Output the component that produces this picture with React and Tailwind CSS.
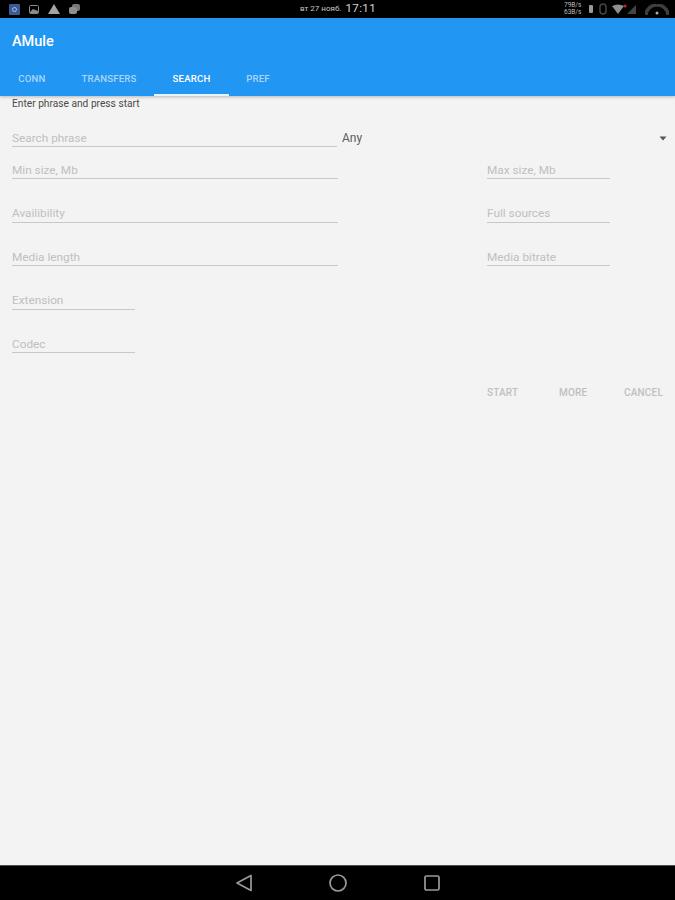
const font = { fontFamily: '"Roboto", "Liberation Sans", sans-serif' };

function Field({ label, className = "" }) {
  return (
    <div className={`h-[23px] border-b border-[#c8c8c8] flex items-center text-[11.8px] leading-none text-[#c0c0c0] pt-[7px] ${className}`}>
      {label}
    </div>
  );
}

function Row({ left, right }) {
  return (
    <div className="flex justify-between pr-[65px] h-[43.6px] items-end">
      <Field label={left} className="w-[326px]" />
      {right && <Field label={right} className="w-[123px]" />}
    </div>
  );
}

function StatusBar() {
  return (
    <div className="h-[18px] bg-black flex items-center justify-between pl-[9px] pr-[6px] relative">
      <div className="flex items-center gap-[9px]">
        <div className="w-[11px] h-[11px] bg-[#3c5b94] rounded-[1px] flex items-center justify-center">
          <div className="w-[5px] h-[5px] border border-[#a9bedf] rounded-full" />
        </div>
        <svg width="10" height="9" viewBox="0 0 10 9"><rect x="0.5" y="0.5" width="9" height="8" rx="1" fill="none" stroke="#8a8a8a" /><path d="M1 7 L4 4 L9 6 V8 H1Z" fill="#8a8a8a" /></svg>
        <svg width="12" height="10" viewBox="0 0 12 10"><path d="M6 0 L12 10 H0Z" fill="#a3a3a3" /></svg>
        <svg width="11" height="10" viewBox="0 0 11 10"><rect x="3" y="0" width="8" height="7" rx="2" fill="#777" /><rect x="0" y="3" width="8" height="7" rx="2" fill="#8f8f8f" /></svg>
      </div>
      <div className="absolute left-[300px] top-0 h-[18px] flex items-center gap-[4px] text-[#c8c8c8]">
        <span className="text-[8px]">вт 27 нояб.</span>
        <span className="text-[11.5px] tracking-[0.4px] text-[#d4d4d4]">17:11</span>
      </div>
      <div className="flex items-center gap-[5px]">
        <div className="flex flex-col text-[6.5px] leading-[7px] text-[#bdbdbd] w-[24px]">
          <span>79B/s</span>
          <span>63B/s</span>
        </div>
        <svg width="6" height="10" viewBox="0 0 6 10" className="-ml-[5px]"><rect x="1" y="1" width="4" height="8" rx="1" fill="#999" /></svg>
        <svg width="8" height="12" viewBox="0 0 8 12"><rect x="1" y="1" width="6" height="10" rx="3" fill="none" stroke="#444" strokeWidth="1.5" /></svg>
        <svg width="28" height="11" viewBox="0 0 28 11"><path d="M0 2 Q6 -1 12 2 L6 10Z" fill="#8f8f8f" /><circle cx="13" cy="2" r="1.5" fill="#c62828" /><path d="M24 1 V10 H15Z" fill="#444" /></svg>
        <svg width="24" height="11" viewBox="0 0 24 11"><path d="M1 11 A11 10 0 0 1 23 11" fill="none" stroke="#3d3d3d" strokeWidth="3.5" /><circle cx="12" cy="9" r="1.5" fill="#aaa" /></svg>
      </div>
    </div>
  );
}

function Tab({ label, active, className }) {
  return (
    <div className={`h-[36px] pt-[5px] flex items-center justify-center text-[9.6px] font-medium tracking-[0.2px] border-b-2 ${active ? "text-white font-bold border-[#e8f2fb]" : "text-[#a9d5fb] border-transparent"} ${className}`}>
      {label}
    </div>
  );
}

export default function App() {
  return (
    <div style={font} className="w-[675px] h-[900px] bg-[#f3f3f3] flex flex-col overflow-hidden">
      <StatusBar />
      <header className="h-[78px] bg-[#2196f3] flex flex-col justify-between shadow-[0_1px_3px_rgba(0,0,0,0.25)]">
        <div className="pl-[12px] pt-[16px] text-[14.5px] leading-[16px] font-medium text-white">AMule</div>
        <div className="flex">
          <Tab label="CONN" className="w-[64px]" />
          <Tab label="TRANSFERS" className="w-[90px]" />
          <Tab label="SEARCH" active className="w-[75px]" />
          <Tab label="PREF" className="w-[58px]" />
        </div>
      </header>
      <main className="flex-1 pl-[12px]">
        <div className="text-[10.2px] leading-[14px] text-[#4a4a4a] pt-[1px]">Enter phrase and press start</div>
        <div className="flex h-[28px] mt-[8px] items-end">
          <Field label="Search phrase" className="w-[325px]" />
          <div className="ml-[5px] flex-1 flex items-center justify-between pr-[8px] h-[18px] text-[12px] text-[#5c5c5c]">
            <span>Any</span>
            <svg width="8" height="5" viewBox="0 0 8 5" aria-hidden="true"><path d="M0.5 0.5 H7.5 L4 4.5Z" fill="#555" /></svg>
          </div>
        </div>
        <div className="-mt-[11.5px]">
          <Row left="Min size, Mb" right="Max size, Mb" />
          <Row left="Availibility" right="Full sources" />
          <Row left="Media length" right="Media bitrate" />
          <div className="h-[43.6px] flex items-end"><Field label="Extension" className="w-[123px]" /></div>
          <div className="h-[43.6px] flex items-end"><Field label="Codec" className="w-[123px]" /></div>
        </div>
        <div className="flex justify-end mt-[33px] text-[10px] font-medium leading-[14px] text-[#c0c0c0] tracking-[0.2px] pr-[12px]">
          <span className="w-[72px]">START</span>
          <span className="w-[65px]">MORE</span>
          <span>CANCEL</span>
        </div>
      </main>
      <nav className="h-[35px] bg-black border-t border-[#4a4a4a] flex items-center justify-center gap-[75px]">
        <svg width="18" height="18" viewBox="0 0 18 18"><path d="M16 1.5 V16.5 L2 9Z" fill="none" stroke="#9a9a9a" strokeWidth="1.7" strokeLinejoin="round" /></svg>
        <svg width="20" height="20" viewBox="0 0 20 20"><circle cx="10" cy="10" r="8" fill="none" stroke="#9a9a9a" strokeWidth="1.7" /></svg>
        <svg width="18" height="18" viewBox="0 0 18 18"><rect x="2" y="2" width="14" height="14" rx="1.5" fill="none" stroke="#9a9a9a" strokeWidth="1.7" /></svg>
      </nav>
    </div>
  );
}
